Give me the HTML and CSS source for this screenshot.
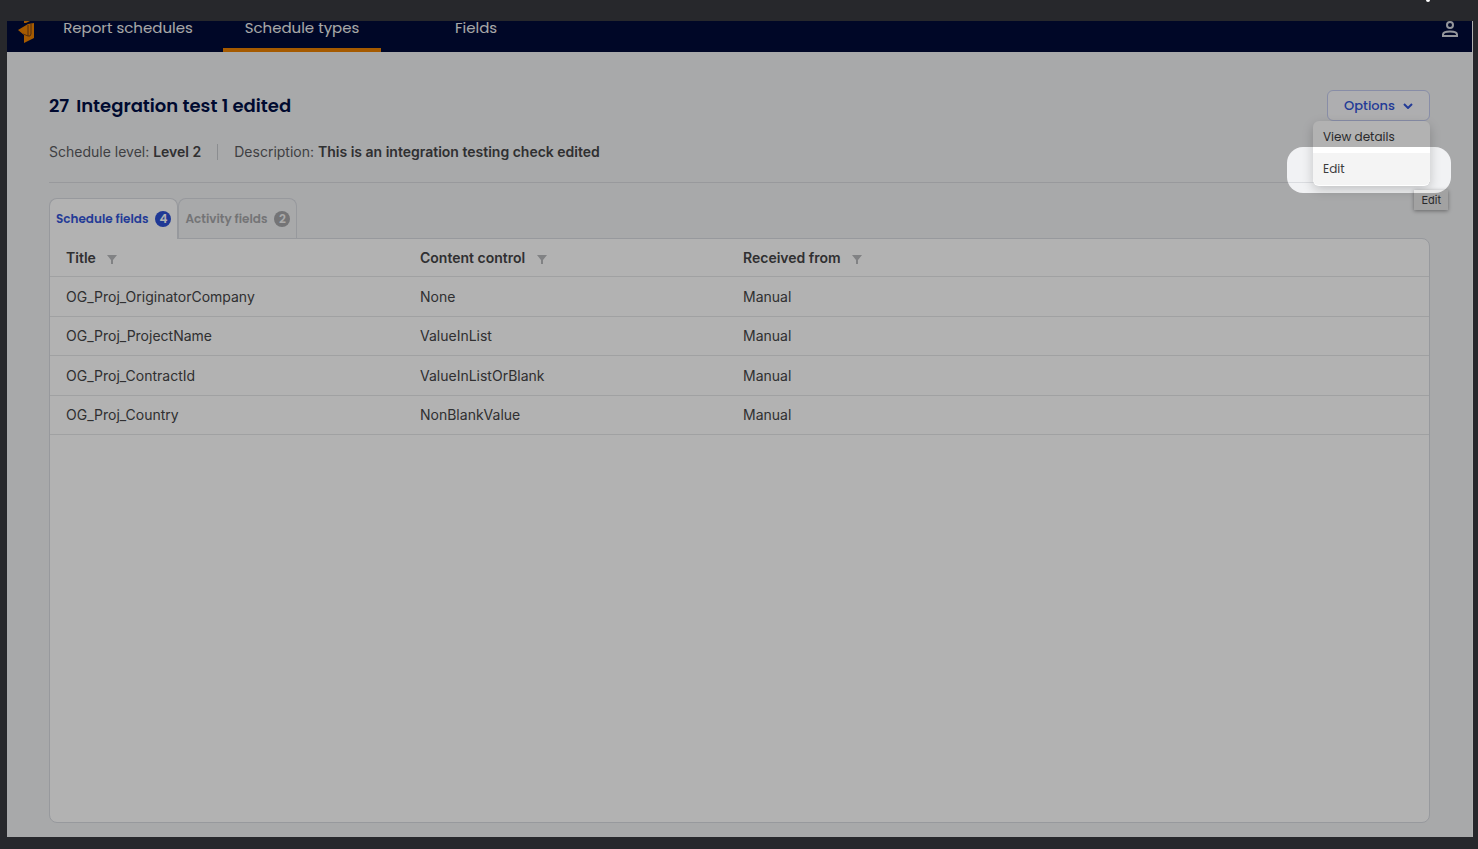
FILE: index.html
```
<!DOCTYPE html>
<html lang="en">

<head>
  <meta charset="UTF-8" />
  <meta name="viewport" content="width=device-width, initial-scale=1.0" />
  <title>Schedule types</title>
  <link rel="stylesheet" href="styles.css">
</head>

<body>
  <span class="pointer-tip"></span>

  <div class="app">
    <header class="navbar">
      <a class="logo" href="#" aria-label="Home">
        <svg width="18" height="23" viewBox="0 0 18 23">
          <path d="M6 0h6L8 2H6z" />
          <path d="M0 9l10-6 6-1v15l-10 5v-8z" />
          <path class="logo-line" d="M5 13l5 2h2l1-2V3M10 4v11" />
        </svg>
      </a>
      <nav class="nav-links">
        <a class="nav-link" href="#">Report schedules</a>
        <a class="nav-link active" href="#">Schedule types</a>
        <a class="nav-link" href="#">Fields</a>
      </nav>
      <button class="user-button" type="button" aria-label="Account">
        <svg width="18" height="17" viewBox="0 0 18 17">
          <circle cx="9" cy="4" r="3" />
          <path d="M2 15v-1.500c0-2.200 3.500-3 7-3s7 .8 7 3V15z" />
        </svg>
      </button>
    </header>

    <main class="content">
      <div class="title-row">
        <h1><span>27</span> <span>Integration test 1 edited</span></h1>

        <div class="options">
          <button class="options-button" type="button">
            Options
            <svg width="10" height="6" viewBox="0 0 10 6">
              <path d="M1 1l4 4 4-4" />
            </svg>
          </button>

          <!-- Options menu -->
          <div class="menu">
            <button class="menu-item" type="button">View details</button>
            <button class="menu-item hovered" type="button">Edit</button>
            <span class="tooltip" role="tooltip">Edit</span>
            <div class="spotlight"></div>
          </div>
        </div>
      </div>

      <div class="meta">
        <span>Schedule level: <strong>Level 2</strong></span>
        <span class="separator"></span>
        <span>Description: <strong>This is an integration testing check edited</strong></span>
      </div>

      <div class="tabs">
        <button class="tab selected" type="button">Schedule fields <span class="badge">4</span></button>
        <button class="tab" type="button">Activity fields <span class="badge">2</span></button>
      </div>

      <div class="panel">
        <table class="fields">
          <thead>
            <tr>
              <th class="col-title">Title <svg class="filter" width="10" height="9" viewBox="0 0 10 9"><path d="M0 0h10L6 5v4H4V5z" /></svg></th>
              <th class="col-control">Content control <svg class="filter" width="10" height="9" viewBox="0 0 10 9"><path d="M0 0h10L6 5v4H4V5z" /></svg></th>
              <th>Received from <svg class="filter" width="10" height="9" viewBox="0 0 10 9"><path d="M0 0h10L6 5v4H4V5z" /></svg></th>
            </tr>
          </thead>
          <tbody>
            <tr>
              <td>OG_Proj_OriginatorCompany</td>
              <td>None</td>
              <td>Manual</td>
            </tr>
            <tr>
              <td>OG_Proj_ProjectName</td>
              <td>ValueInList</td>
              <td>Manual</td>
            </tr>
            <tr>
              <td>OG_Proj_ContractId</td>
              <td>ValueInListOrBlank</td>
              <td>Manual</td>
            </tr>
            <tr>
              <td>OG_Proj_Country</td>
              <td>NonBlankValue</td>
              <td>Manual</td>
            </tr>
          </tbody>
        </table>
      </div>
    </main>
  </div>
</body>

</html>
```
FILE: styles.css
```
* {
  box-sizing: border-box;
}

body {
  display: flex;
  min-height: 100vh;
  margin: 0;
  padding: 21px 5px 12px 7px;
  background: #27282c;
  font-family: Inter, "Liberation Sans", sans-serif;
  font-size: 14px;
  color: #454547;
}

button {
  padding: 0;
  border: none;
  background: none;
  font-family: Poppins, Inter, sans-serif;
  cursor: pointer;
}

.pointer-tip {
  position: absolute;
  top: 0;
  right: 48px;
  width: 4px;
  height: 2px;
  border-radius: 0 0 2px 2px;
  background: #fff;
}

/* The app clips the dimming shadow of the spotlight */
.app {
  flex: 1;
  display: flex;
  flex-direction: column;
  overflow: hidden;
  border-right: 1px solid #b0b0b0;
  background: #f1f2f4;
}

/* Navigation */
.navbar {
  display: flex;
  height: 31px;
  padding: 0 13px 0 11px;
  background: #000b38;
}

.logo {
  width: 31px;
}

.logo svg {
  display: block;
  fill: #ed8200;
}

.logo .logo-line {
  fill: none;
  stroke: #733f19;
}

.nav-links {
  flex: 1;
  display: flex;
  gap: 16px;
}

.nav-link {
  width: 158px;
  border-bottom: 4px solid transparent;
  font-family: Poppins, Inter, sans-serif;
  font-size: 15px;
  line-height: 13px;
  text-align: center;
  text-decoration: none;
  color: #f1f1f1;
}

.nav-link.active {
  border-bottom-color: #ed8200;
}

.user-button {
  height: 17px;
}

.user-button svg {
  display: block;
  fill: none;
  stroke: #d5d7df;
  stroke-width: 2;
}

/* Page content */
.content {
  flex: 1;
  display: flex;
  flex-direction: column;
  padding: 38px 42px 14px;
}

.title-row {
  display: flex;
  justify-content: space-between;
  align-items: center;
}

h1 {
  display: flex;
  gap: 7px;
  margin: 0;
  font-family: Poppins, Inter, sans-serif;
  font-size: 18px;
  font-weight: 600;
  line-height: 24px;
  color: #000f45;
}

.options {
  position: relative;
}

.options-button {
  display: flex;
  align-items: center;
  gap: 8px;
  height: 31px;
  padding: 0 16px;
  border: 1px solid #c3cbf0;
  border-radius: 6px;
  background: #fafafc;
  font-size: 13px;
  font-weight: 500;
  color: #3355d8;
}

.options-button svg {
  fill: none;
  stroke: #3355d8;
  stroke-width: 2;
}

.menu {
  position: absolute;
  top: 31px;
  right: 0;
  z-index: 10;
  width: 117px;
  padding-bottom: 1px;
  border-radius: 6px;
  background: #fff;
  box-shadow: 0 4px 12px rgba(0, 0, 0, 0.2);
}

.menu-item {
  display: block;
  width: 100%;
  height: 32px;
  padding: 0 10px;
  border-radius: 0 0 6px 6px;
  font-size: 12px;
  text-align: left;
  color: #3c3c3e;
}

.menu-item.hovered {
  background: #f4f4f4;
}

.tooltip {
  position: absolute;
  top: 69px;
  right: -18px;
  padding: 0 7px;
  background: #e8e8e8;
  box-shadow: 0 1px 4px rgba(0, 0, 0, 0.4);
  font-size: 11px;
  line-height: 20px;
  color: #3c3c3e;
}

/* Highlights the menu item and dims everything around it */
.spotlight {
  position: absolute;
  top: 26px;
  right: -21px;
  width: 164px;
  height: 46px;
  border-radius: 16px;
  box-shadow: 0 0 0 3000px rgba(0, 0, 0, 0.3);
  pointer-events: none;
}

.meta {
  display: flex;
  align-items: center;
  gap: 16px;
  margin-bottom: 15px;
  padding: 21px 0 20px;
  border-bottom: 1px solid #dadce0;
  line-height: 20px;
  color: #5b5c60;
}

.meta strong {
  font-weight: 600;
  color: #454547;
}

.separator {
  width: 1px;
  height: 16px;
  background: #c8cacf;
}

/* Tabs */
.tabs {
  display: flex;
}

.tab {
  display: flex;
  align-items: center;
  gap: 7px;
  height: 40px;
  padding: 0 6px;
  border: 1px solid #d8dbe1;
  border-bottom: none;
  border-radius: 8px 8px 0 0;
  font-size: 12px;
  font-weight: 600;
  color: #a6a7aa;
}

.tab.selected {
  z-index: 1;
  margin-bottom: -1px;
  height: 41px;
  background: #fff;
  color: #3355d8;
}

.badge {
  width: 16px;
  border-radius: 8px;
  background: #a6a7aa;
  line-height: 16px;
  text-align: center;
  color: #f4f4f4;
}

.tab.selected .badge {
  background: #2d51d6;
  color: #fff;
}

/* Table */
.panel {
  flex: 1;
  border: 1px solid #d8dbe1;
  border-radius: 0 8px 8px 8px;
  background: #fff;
}

.fields {
  width: 100%;
  height: 196px;
  border-spacing: 0;
  table-layout: fixed;
}

.col-title {
  width: 354px;
}

.col-control {
  width: 323px;
}

th,
td {
  padding: 0 16px;
  border-bottom: 1px solid #e6e7e9;
  text-align: left;
}

th {
  height: 38px;
  font-weight: 600;
}

.filter {
  margin-left: 8px;
  vertical-align: -1px;
  fill: #b9babd;
}
```
